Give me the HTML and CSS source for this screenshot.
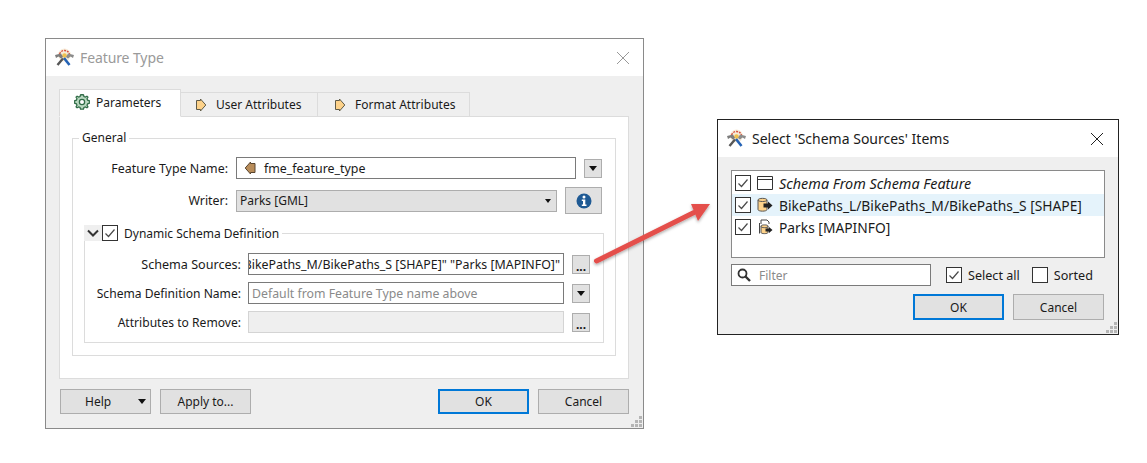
FILE: index.html
```html
<!DOCTYPE html>
<html lang="en">
<head>
<meta charset="utf-8">
<title>Feature Type</title>
<link rel="stylesheet" href="styles.css">
</head>
<body>
<svg class="defs" width="0" height="0" aria-hidden="true">
  <defs>
    <symbol id="logo" viewBox="0 0 20 20">
      <circle cx="10.500" cy="7" r="6.500" fill="#f6ecd9"/>
      <path d="M5.500 6C6.500 3.500 8.500 2.500 10.500 2.500S14.500 3.500 15.500 6" fill="none" stroke="#d9503f" stroke-width="1.400" stroke-dasharray="2 1"/>
      <circle cx="10.500" cy="7.500" r="2.300" fill="#efc04e"/>
      <circle cx="7" cy="8.500" r="1.200" fill="#d9503f"/>
      <circle cx="14" cy="8.500" r="1.200" fill="#d9503f"/>
      <path d="M1 7 7 5.500 9 9 7 10.500 4.500 8.500 2 10Z" fill="#7d7d7d"/>
      <path d="M20 7 14 5.500 12 9 14 10.500 16.500 8.500 19 10Z" fill="#8c8c8c"/>
      <path d="M10 10 15.500 17" stroke="#2462b5" stroke-width="2.600" fill="none"/>
      <path d="M9 10.500 3.500 17" stroke="#565656" stroke-width="2.400" fill="none"/>
    </symbol>
    <symbol id="check" viewBox="0 0 14 14">
      <path d="M2.500 7.500 5.500 10.500 11.500 3.500" fill="none" stroke="#4a4a4a" stroke-width="1.200"/>
    </symbol>
    <symbol id="tag" viewBox="0 0 12 14">
      <path d="M1.500 2.500H5.500V1L10.800 7 5.500 13V11.500H1.500Z" fill="#fdd28a" stroke="#5f5a48" stroke-width="1"/>
    </symbol>
  </defs>
</svg>

<main class="desk">
  <section class="dialog dialog-main">
    <header class="titlebar">
      <svg class="logo"><use href="#logo"/></svg>
      <span class="title title-muted">Feature Type</span>
      <svg class="close close-muted" viewBox="0 0 14 14"><path d="M1 1 13 13M13 1 1 13"/></svg>
    </header>
    <div class="body">
      <nav class="tabs">
        <div class="tab tab-active tab-one">
          <svg class="gear" viewBox="1 1 14 14"><path d="M8 1.500 9.300 1.700 9.700 3.200 10.900 3.700 12.300 2.900 13.200 3.800 12.400 5.200 12.900 6.400 14.400 6.800V9.200L12.900 9.600 12.400 10.800 13.200 12.200 12.300 13.100 10.900 12.300 9.700 12.800 9.300 14.300H6.700L6.300 12.800 5.100 12.300 3.700 13.100 2.800 12.200 3.600 10.800 3.100 9.600 1.600 9.200V6.800L3.100 6.400 3.600 5.200 2.800 3.800 3.700 2.900 5.100 3.700 6.300 3.200 6.700 1.700Z" fill="#b9d8c0" stroke="#2f6b46" stroke-width="1.100"/><circle cx="8" cy="8" r="2.300" fill="#fff" stroke="#2f6b46" stroke-width="1.100"/></svg>
          <span>Parameters</span>
        </div>
        <div class="tab tab-two"><svg class="tag"><use href="#tag"/></svg><span>User Attributes</span></div>
        <div class="tab tab-three"><svg class="tag"><use href="#tag"/></svg><span class="tab-text-wide">Format Attributes</span></div>
      </nav>
      <div class="pane">
        <fieldset class="group group-general">
          <legend class="legend-general">General</legend>
          <div class="row row-name">
            <label class="label label-top">Feature Type Name:</label>
            <div class="input input-name">
              <svg class="tag-back" viewBox="0 0 12 14"><path d="M11 2.500H6.500V1L1.200 7 6.500 13V11.500H11Z" fill="#b98d5a" stroke="#5a4630" stroke-width="1"/></svg>
              <span>fme_feature_type</span>
            </div>
            <button class="mini mini-name"><i class="caret"></i></button>
          </div>
          <div class="row row-writer">
            <label class="label label-top">Writer:</label>
            <div class="combo"><span>Parks [GML]</span><i class="caret caret-small"></i></div>
            <button class="info-btn">
              <svg class="info" viewBox="0 0 16 16"><circle cx="8" cy="8" r="7.500" fill="#1f5a94"/><circle cx="8" cy="4" r="1.500" fill="#fff"/><path d="M5.800 6.500H9.300V11.500H10.500V13H5.800V11.500H7V8H5.800Z" fill="#fff"/></svg>
            </button>
          </div>
          <fieldset class="group group-dynamic">
            <legend class="legend-dynamic">
              <span class="chevron"><svg viewBox="0 0 12 8"><path d="M1 1.500 6 6.500 11 1.500" fill="none" stroke="#333" stroke-width="2"/></svg></span>
              <span class="checkbox"><svg><use href="#check"/></svg></span>
              <span class="legend-text">Dynamic Schema Definition</span>
            </legend>
            <div class="row row-schema row-first">
              <label class="label label-sub label-sources">Schema Sources:</label>
              <div class="input input-sub input-scroll"><span class="scrolled">BikePaths_M/BikePaths_S [SHAPE]" "Parks [MAPINFO]"</span></div>
              <button class="mini mini-sub dots">...</button>
            </div>
            <div class="row row-schema">
              <label class="label label-sub">Schema Definition Name:</label>
              <div class="input input-sub placeholder"><span>Default from Feature Type name above</span></div>
              <button class="mini mini-sub"><i class="caret"></i></button>
            </div>
            <div class="row row-schema">
              <label class="label label-sub">Attributes to Remove:</label>
              <div class="input input-sub input-disabled"></div>
              <button class="mini mini-sub dots">...</button>
            </div>
          </fieldset>
        </fieldset>
      </div>
      <footer class="footer">
        <button class="btn btn-help"><span>Help</span><i class="caret"></i></button>
        <button class="btn btn-apply">Apply to...</button>
        <button class="btn btn-primary btn-push">OK</button>
        <button class="btn">Cancel</button>
      </footer>
    </div>
    <svg class="grip" viewBox="0 0 11 11"><path d="M8 0h3v3H8zM4 4h3v3H4zM8 4h3v3H8zM0 8h3v3H0zM4 8h3v3H4zM8 8h3v3H8z"/></svg>
  </section>

  <svg class="arrow" viewBox="0 0 130 80">
    <defs><filter id="shadow" x="-20%" y="-20%" width="140%" height="140%"><feDropShadow dx="0" dy="1.500" stdDeviation="1.500" flood-color="#000" flood-opacity=".35"/></filter></defs>
    <g filter="url(#shadow)">
      <path d="M5.500 65 103 16.500" fill="none" stroke="#e44f4c" stroke-width="5" stroke-linecap="round"/>
      <path d="M119 8 100 8 107 25Z" fill="#e44f4c"/>
    </g>
  </svg>

  <section class="dialog dialog-select">
    <header class="titlebar titlebar-select">
      <svg class="logo logo-select"><use href="#logo"/></svg>
      <span class="title">Select 'Schema Sources' Items</span>
      <svg class="close" viewBox="0 0 14 14"><path d="M1 1 13 13M13 1 1 13"/></svg>
    </header>
    <div class="body body-select">
      <ul class="list">
        <li class="item">
          <span class="checkbox"><svg><use href="#check"/></svg></span>
          <svg class="item-icon" viewBox="0 0 16 16"><path d="M.5 1.500H15.500V14.500H.5ZM.5 4.500H15.500" fill="#fff" stroke="#333"/></svg>
          <em class="item-em">Schema From Schema Feature</em>
        </li>
        <li class="item item-selected">
          <span class="checkbox"><svg><use href="#check"/></svg></span>
          <svg class="item-icon" viewBox="0 0 16 16"><path d="M1 3C1 .8 10 .8 10 3V12.500C10 14.700 1 14.700 1 12.500Z" fill="#fdd28a" stroke="#555"/><path d="M1 3C1 5 10 5 10 3" fill="none" stroke="#555"/><path d="M6.500 6.500H11V4.500L15.500 8.500 11 12.500V10.500H6.500Z" fill="#222"/></svg>
          <span>BikePaths_L/BikePaths_M/BikePaths_S [SHAPE]</span>
        </li>
        <li class="item">
          <span class="checkbox"><svg><use href="#check"/></svg></span>
          <svg class="item-icon" viewBox="0 0 16 16"><path d="M4 5V1H10L12 3V5M2.500 14.500V4" fill="none" stroke="#444"/><path d="M4 7C4 5.500 11 5.500 11 7V13.500C11 15 4 15 4 13.500Z" fill="#fdd28a" stroke="#555"/><path d="M4 7.500C4 9 11 9 11 7.500" fill="none" stroke="#555"/><path d="M8.500 9.500H12V8L15.500 11 12 14V12.500H8.500Z" fill="#222"/></svg>
          <span>Parks [MAPINFO]</span>
        </li>
      </ul>
      <div class="filter-row">
        <div class="filter">
          <svg class="search" viewBox="0 0 14 14"><circle cx="5.500" cy="5.500" r="4" fill="none" stroke="#333" stroke-width="1.800"/><path d="M8.500 8.500 13 13" stroke="#333" stroke-width="2.400"/></svg>
          <span>Filter</span>
        </div>
        <span class="checkbox checkbox-all"><svg><use href="#check"/></svg></span>
        <span class="check-label">Select all</span>
        <span class="checkbox checkbox-sorted"></span>
        <span class="check-label">Sorted</span>
      </div>
      <footer class="footer-select">
        <button class="btn btn-primary">OK</button>
        <button class="btn">Cancel</button>
      </footer>
    </div>
    <svg class="grip" viewBox="0 0 11 11"><path d="M8 0h3v3H8zM4 4h3v3H4zM8 4h3v3H8zM0 8h3v3H0zM4 8h3v3H4zM8 8h3v3H8z"/></svg>
  </section>
</main>
</body>
</html>
```

FILE: styles.css
```css
* { box-sizing: border-box; }
html, body { margin: 0; padding: 0; height: 100%; background: #fff; }
body { font: 12px "Noto Sans", "Open Sans", sans-serif; color: #1a1a1a; overflow: hidden; }
.defs { position: absolute; }
.desk { position: relative; width: 1147px; height: 463px; }

.dialog { position: absolute; display: flex; flex-direction: column; background: #efefef; }
.dialog-main { left: 45px; top: 38px; width: 599px; height: 391px; border: 1px solid #8a8a8a; }
.dialog-select { left: 717px; top: 119px; width: 402px; height: 216px; border: 1px solid #222; }

.titlebar { display: flex; align-items: center; height: 37px; flex: none; background: #fff; padding: 0 13px 0 8px; }
.titlebar-select { padding: 0 14px 0 8px; }
.logo { width: 20px; height: 20px; flex: none; }
.title { margin-left: 6px; font-size: 14px; flex: 1; }
.title-muted { color: #9a9a9a; letter-spacing: -.1px; }
.close { width: 14px; height: 14px; flex: none; stroke: #222; stroke-width: 1; fill: none; }
.close-muted { stroke: #999; }

.body { flex: 1; display: flex; flex-direction: column; padding: 13px 14px 0 13px; min-height: 0; }
.tabs { display: flex; align-items: flex-end; height: 28px; flex: none; position: relative; z-index: 1; margin-bottom: -1px; }
.tab { display: flex; align-items: center; height: 25px; background: #efefef; border: 1px solid #dcdcdc; border-left: 0; }
.tab-active { height: 28px; background: #fff; border-left: 1px solid #dcdcdc; border-bottom-color: #fff; padding-bottom: 2px; }
.tab-one { width: 122px; padding-left: 14px; }
.tab-two { width: 137px; padding-left: 14px; }
.tab-three { width: 152px; padding-left: 16px; }
.tab-text-wide { letter-spacing: .04px; }
.gear { width: 16px; height: 16px; margin-right: 6px; }
.tag { width: 12px; height: 14px; margin-right: 9px; }

.pane { height: 263px; background: #fff; border: 1px solid #dcdcdc; padding: 13px 12px 0; flex: none; }
.group { margin: 0; min-width: 0; border: 1px solid #dcdcdc; }
.group-general { height: 226px; padding: 0 11px; }
.legend-general { padding: 0 3px; margin-left: -5px; line-height: 16px; height: 16px; }
.row { display: flex; align-items: center; }
.row-name { height: 22px; margin-top: 11px; }
.row-writer { height: 27px; margin-top: 8px; }
.label { flex: none; text-align: right; font-size: 12.400px; white-space: nowrap; }
.label-top { width: 144px; margin-right: 8px; }

.input { display: flex; align-items: center; height: 22px; background: #fff; border: 1px solid #7a7a7a; overflow: hidden; white-space: nowrap; }
.input-name { width: 340px; padding-left: 7px; font-size: 12.400px; }
.tag-back { width: 12px; height: 14px; margin-right: 8px; flex: none; }
.mini { display: flex; align-items: center; justify-content: center; flex: none; width: 18px; height: 19px; padding: 0; background: #e1e1e1; border: 1px solid #adadad; font: inherit; color: #111; }
.mini-name { margin-left: 8px; }
.caret { display: block; width: 0; height: 0; border: 4px solid transparent; border-top: 5px solid #111; border-bottom: 0; }
.caret-small { border-width: 3.500px; border-top-width: 4px; border-bottom: 0; }
.combo { display: flex; align-items: center; justify-content: space-between; width: 321px; height: 22px; padding: 0 5px 0 3px; background: #e1e1e1; border: 1px solid #adadad; }
.info-btn { display: flex; align-items: center; justify-content: center; margin-left: 8px; width: 37px; height: 27px; padding: 0; background: #e1e1e1; border: 1px solid #adadad; }
.info { width: 16px; height: 16px; }

.group-dynamic { margin-top: 11px; height: 118px; padding: 0 12px 0 0; }
.legend-dynamic { display: flex; align-items: center; height: 16px; padding: 0 3px 0 0; margin-left: -1px; }
.chevron { display: flex; align-items: center; justify-content: center; width: 18px; height: 16px; background: #efefef; }
.chevron svg { width: 12px; height: 8px; }
.checkbox { display: block; flex: none; width: 16px; height: 16px; background: #fff; border: 1px solid #333; }
.checkbox svg { display: block; width: 14px; height: 14px; }
.legend-text { margin-left: 6px; }
.row-schema { height: 22px; margin-bottom: 7px; }
.row-first { margin-top: 12px; }
.label-sub { width: 156px; margin-right: 7px; font-size: 12.100px; }
.label-sources { font-size: 12.600px; }
.input-sub { width: 316px; padding-left: 3px; font-size: 12.300px; }
.input-scroll { justify-content: flex-end; padding: 0 3px 0 0; font-size: 12.400px; }
.scrolled { flex: none; }
.placeholder { color: #8a8a8a; }
.input-disabled { background: #efefef; border-color: #d4d4d4; }
.mini-sub { margin-left: 8px; }
.dots { font-size: 12px; font-weight: 700; line-height: 1; align-items: flex-end; }

.footer { display: flex; align-items: center; gap: 9px; height: 25px; margin-top: 10px; padding-left: 1px; flex: none; }
.btn { width: 91px; height: 25px; padding: 0; background: #e1e1e1; border: 1px solid #adadad; font: inherit; color: #1a1a1a; }
.btn-primary { border: 2px solid #0078d7; }
.btn-push { margin-left: auto; }
.btn-help { display: flex; align-items: center; justify-content: space-between; padding: 0 4px 0 24px; }

.grip { position: absolute; right: 1px; bottom: 1px; width: 11px; height: 11px; fill: #b5b5b5; }

.arrow { position: absolute; left: 591px; top: 196px; width: 130px; height: 80px; overflow: visible; }

.body-select { padding: 13px 13px 0 13px; }
.list { list-style: none; margin: 0; padding: 1px 0 0; height: 88px; flex: none; background: #fff; border: 1px solid #8a8a8a; font-size: 13.800px; }
.item { display: flex; align-items: center; height: 22px; padding-left: 3px; white-space: nowrap; }
.item-selected { background: #e5f3fb; }
.item-icon { width: 16px; height: 16px; margin-left: 6px; margin-right: 6px; flex: none; }
.item-em { font-size: 14.400px; }
.filter-row { display: flex; align-items: center; height: 22px; margin-top: 6px; flex: none; }
.filter { display: flex; align-items: center; width: 200px; height: 22px; background: #fff; border: 1px solid #7a7a7a; padding-left: 5px; color: #8a8a8a; }
.search { width: 14px; height: 14px; margin-right: 8px; }
.checkbox-all { margin-left: 15px; }
.checkbox-sorted { margin-left: 12px; }
.check-label { margin-left: 6px; font-size: 12.600px; }
.footer-select { display: flex; justify-content: flex-end; gap: 9px; margin-top: 8px; margin-right: 1px; flex: none; }
.footer-select .btn { height: 26px; }
```
